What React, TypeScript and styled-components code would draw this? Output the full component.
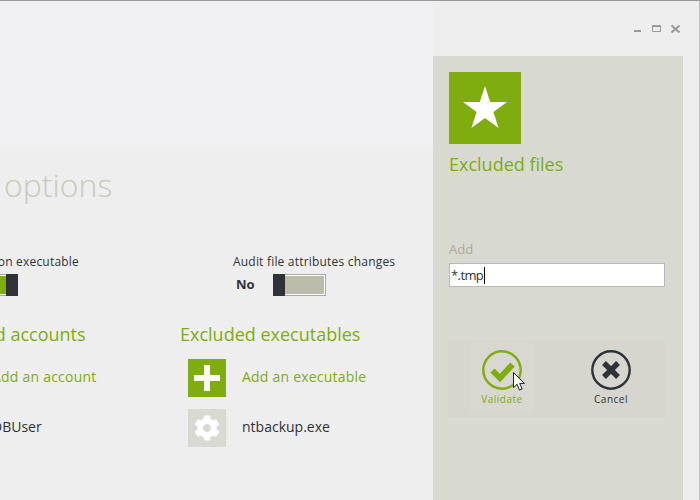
import styled, { createGlobalStyle } from "styled-components";
import { FaCog } from "react-icons/fa";

const GREEN = "#7fac0e";
const DARK = "#2f3238";

const GlobalStyle = createGlobalStyle`
  html, body {
    margin: 0;
    padding: 0;
    background: #eeeeee;
    font-family: "Open Sans", "Noto Sans", sans-serif;
  }
`;

const Window = styled.div`
  position: relative;
  display: flex;
  width: 700px;
  height: 500px;
  box-sizing: border-box;
  border-top: 1px solid #999999;
  border-right: 1px solid #c4c4c6;
  background: #eeeeee;
  overflow: hidden;
`;

const Main = styled.main`
  flex: 0 0 433px;
  display: flex;
  flex-direction: column;
  overflow: hidden;
`;

const TopBand = styled.div`
  flex: 0 0 146px;
  background: #f0eff1;
`;

const PageTitle = styled.h1`
  margin: 14px 0 0 4px;
  font-size: 32px;
  line-height: 48px;
  font-weight: 300;
  color: #c9c9b9;
`;

const OptionRow = styled.div`
  display: flex;
  margin-top: 44px;
`;

const Option = styled.div<{ $clipped?: boolean }>`
  flex: 0 0 auto;
  display: flex;
  flex-direction: column;
  align-items: ${(p) => (p.$clipped ? "flex-end" : "flex-start")};
  width: ${(p) => (p.$clipped ? "79px" : "auto")};
  margin-left: ${(p) => (p.$clipped ? "0" : "154px")};
`;

const OptionLabel = styled.div`
  font-size: 12px;
  line-height: 18px;
  letter-spacing: 0.2px;
  color: #2f3238;
  white-space: nowrap;
`;

const SwitchLine = styled.div<{ $clipped?: boolean }>`
  display: flex;
  align-items: center;
  margin-top: 3px;
  margin-right: ${(p) => (p.$clipped ? "61px" : "0")};
  margin-left: ${(p) => (p.$clipped ? "0" : "3px")};
`;

const SwitchValue = styled.span`
  width: 37px;
  margin-bottom: 2px;
  font-size: 13px;
  font-weight: 700;
  color: #2f3238;
`;

const Switch = styled.div<{ $on: boolean }>`
  position: relative;
  flex: 0 0 auto;
  width: 53px;
  height: 22px;
  box-sizing: border-box;
  border: 1px solid #a6a6a6;
  background: ${(p) => (p.$on ? GREEN : "#bbbcaa")};
  box-shadow: inset 0 0 0 1px #ffffff;
`;

const Thumb = styled.div<{ $on: boolean }>`
  position: absolute;
  top: -1px;
  bottom: -1px;
  width: 12px;
  background: ${DARK};
  ${(p) => (p.$on ? "right: -1px;" : "left: -1px;")}
`;

const Lists = styled.div`
  display: grid;
  grid-template-columns: 250px 250px;
  margin-top: 26px;
  margin-left: -70px;
`;

const ListColumn = styled.section`
  display: flex;
  flex-direction: column;
`;

const ListTitle = styled.h2`
  margin: 0 0 13px;
  font-size: 18px;
  line-height: 24px;
  font-weight: 400;
  color: ${GREEN};
  white-space: nowrap;
`;

const ListRow = styled.div`
  display: flex;
  align-items: center;
  gap: 16px;
  margin: 0 0 12px 8px;
`;

const Tile = styled.div<{ $accent?: boolean }>`
  flex: 0 0 38px;
  height: 38px;
  display: flex;
  align-items: center;
  justify-content: center;
  background: ${(p) => (p.$accent ? GREEN : "#d8d9d0")};
`;

const RowText = styled.span<{ $accent?: boolean }>`
  margin-bottom: 3px;
  font-size: 14px;
  letter-spacing: ${(p) => (p.$accent ? "0.22px" : "0")};
  color: ${(p) => (p.$accent ? GREEN : "#2f3238")};
  white-space: nowrap;
`;

const Side = styled.div`
  flex: 1;
  display: flex;
  flex-direction: column;
`;

const Controls = styled.div`
  flex: 0 0 55px;
  display: flex;
  justify-content: flex-end;
  align-items: flex-start;
  gap: 10px;
  padding: 24px 19px 0 0;
  box-sizing: border-box;
`;

const MinimizeIcon = styled.svg`
  margin-right: 1px;
`;

const Panel = styled.aside`
  flex: 1;
  width: 250px;
  box-sizing: border-box;
  padding: 16px 18px 0 16px;
  background: #d8d9d0;
`;

const BigTile = styled.div`
  width: 72px;
  height: 72px;
  display: flex;
  align-items: center;
  justify-content: center;
  background: ${GREEN};
`;

const PanelTitle = styled.h2`
  margin: 7px 0 0;
  font-size: 18px;
  line-height: 26px;
  font-weight: 400;
  color: ${GREEN};
`;

const FieldLabel = styled.label`
  display: block;
  margin-top: 63px;
  font-size: 13px;
  line-height: 18px;
  color: #a9aa9b;
`;

const Field = styled.div`
  display: flex;
  align-items: center;
  height: 24px;
  margin-top: 5px;
  box-sizing: border-box;
  border: 1px solid #b9b9b9;
  background: #ffffff;
  padding-left: 1px;
  font-size: 13px;
  letter-spacing: -0.6px;
  color: #2f3238;
`;

const Caret = styled.span`
  width: 1px;
  height: 17px;
  margin-left: 1px;
  background: #000000;
`;

const ButtonBand = styled.div`
  position: relative;
  display: flex;
  align-items: flex-start;
  height: 77px;
  margin: 53px 0 0 -1px;
  background: #d6d6ce;
`;

const ActionButton = styled.div<{ $hover?: boolean; $accent?: boolean }>`
  flex: 0 0 64px;
  height: 70px;
  margin: 3px 0 0 ${(p) => (p.$hover ? "22px" : "45px")};
  display: flex;
  flex-direction: column;
  align-items: center;
  padding-top: 7px;
  box-sizing: border-box;
  background: ${(p) => (p.$hover ? "#d8d8d1" : "transparent")};
  color: ${(p) => (p.$accent ? GREEN : DARK)};
`;

const ActionLabel = styled.span`
  margin-top: 1px;
  font-size: 10px;
  line-height: 16px;
  letter-spacing: 0.5px;
`;

const Pointer = styled.svg`
  position: absolute;
  left: 65px;
  top: 32px;
`;

export default function App() {
  return (
    <>
      <GlobalStyle />
      <Window>
        <Main>
          <TopBand />
          <PageTitle>options</PageTitle>
          <OptionRow>
            <Option $clipped>
              <OptionLabel>Audit on executable</OptionLabel>
              <SwitchLine $clipped>
                <Switch $on>
                  <Thumb $on />
                </Switch>
              </SwitchLine>
            </Option>
            <Option>
              <OptionLabel>Audit file attributes changes</OptionLabel>
              <SwitchLine>
                <SwitchValue>No</SwitchValue>
                <Switch $on={false}>
                  <Thumb $on={false} />
                </Switch>
              </SwitchLine>
            </Option>
          </OptionRow>
          <Lists>
            <ListColumn>
              <ListTitle>Excluded accounts</ListTitle>
              <ListRow>
                <Tile $accent />
                <RowText $accent>Add an account</RowText>
              </ListRow>
              <ListRow>
                <Tile />
                <RowText>DBUser</RowText>
              </ListRow>
            </ListColumn>
            <ListColumn>
              <ListTitle>Excluded executables</ListTitle>
              <ListRow>
                <Tile $accent>
                  <svg width="26" height="26" viewBox="0 0 26 26">
                    <path d="M10 0h6v10h10v6H16v10h-6V16H0v-6h10z" fill="#fff" />
                  </svg>
                </Tile>
                <RowText $accent>Add an executable</RowText>
              </ListRow>
              <ListRow>
                <Tile>
                  <FaCog size={26} color="#ffffff" />
                </Tile>
                <RowText>ntbackup.exe</RowText>
              </ListRow>
            </ListColumn>
          </Lists>
        </Main>
        <Side>
          <Controls>
            <MinimizeIcon width="7" height="8" viewBox="0 0 7 8">
              <rect x="0" y="5" width="7" height="2" fill="#9a9a9c" />
            </MinimizeIcon>
            <svg width="9" height="8" viewBox="0 0 9 8">
              <path d="M.5.5h8v6h-8z" fill="none" stroke="#9a9a9c" />
              <rect width="9" height="2" fill="#9a9a9c" />
            </svg>
            <svg width="9" height="8" viewBox="0 0 9 8">
              <path d="M.5.5l8 7M8.5.5l-8 7" stroke="#9a9a9c" strokeWidth="2" />
            </svg>
          </Controls>
          <Panel>
            <BigTile>
              <svg width="46" height="44" viewBox="0 0 46 44">
                <polygon points="23,0 28.2,16 45,16 31.4,25.9 36.6,42 23,32 9.4,42 14.6,25.9 1,16 17.8,16" fill="#fff" />
              </svg>
            </BigTile>
            <PanelTitle>Excluded files</PanelTitle>
            <FieldLabel>Add</FieldLabel>
            <Field>
              *.tmp
              <Caret />
            </Field>
            <ButtonBand>
              <ActionButton $hover $accent>
                <svg width="40" height="40" viewBox="0 0 40 40">
                  <circle cx="20" cy="20" r="18.7" fill="none" stroke={GREEN} strokeWidth="2.4" />
                  <path d="M10.5 20.5l7.5 7.5 12.5-13.5" fill="none" stroke={GREEN} strokeWidth="6" />
                </svg>
                <ActionLabel>Validate</ActionLabel>
              </ActionButton>
              <ActionButton>
                <svg width="40" height="40" viewBox="0 0 40 40">
                  <circle cx="20" cy="20" r="18.7" fill="none" stroke={DARK} strokeWidth="2.4" />
                  <path d="M13 13l14 14M27 13L13 27" fill="none" stroke={DARK} strokeWidth="5.4" />
                </svg>
                <ActionLabel>Cancel</ActionLabel>
              </ActionButton>
              <Pointer width="12" height="19" viewBox="0 0 12 19">
                <path d="M.5.5v15l3.6-3.2 2.4 5.8 2.6-1.1-2.4-5.6h4.8z" fill="#fff" stroke="#222" />
              </Pointer>
            </ButtonBand>
          </Panel>
        </Side>
      </Window>
    </>
  );
}
